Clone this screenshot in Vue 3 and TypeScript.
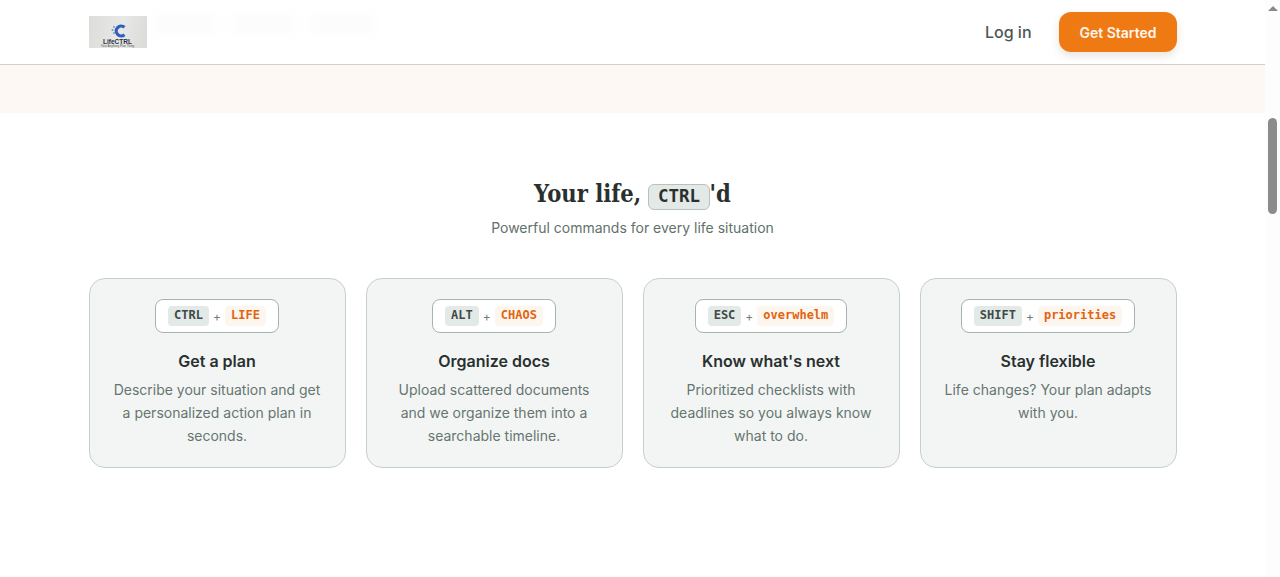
<script setup lang="ts">
interface Command {
  mod: string
  key: string
  title: string
  text: string
}

const commands: Command[] = [
  {
    mod: 'CTRL',
    key: 'LIFE',
    title: 'Get a plan',
    text: 'Describe your situation and get a personalized action plan in seconds.',
  },
  {
    mod: 'ALT',
    key: 'CHAOS',
    title: 'Organize docs',
    text: 'Upload scattered documents and we organize them into a searchable timeline.',
  },
  {
    mod: 'ESC',
    key: 'overwhelm',
    title: "Know what's next",
    text: 'Prioritized checklists with deadlines so you always know what to do.',
  },
  {
    mod: 'SHIFT',
    key: 'priorities',
    title: 'Stay flexible',
    text: 'Life changes? Your plan adapts with you.',
  },
]
</script>

<template>
  <div class="window">
    <div class="page">
      <header class="nav">
        <div class="nav-inner">
          <div class="brand">
            <div class="logo">
              <svg class="logo-mark" width="20" height="14" viewBox="0 0 20 14">
                <path d="M16.5 3.2A5 5 0 1 0 16.5 10.8" fill="none" stroke="#2f5fc0" stroke-width="3.2" />
                <circle cx="6" cy="3" r="1" fill="#7f93b8" />
                <circle cx="4.5" cy="6" r="1" fill="#7f93b8" />
                <circle cx="6" cy="9" r="1" fill="#7f93b8" />
              </svg>
              <span class="logo-name">LifeCTRL</span>
              <span class="logo-tag">Your Anything Plan Thing</span>
            </div>
            <div class="brand-blur">
              <span></span>
              <span></span>
              <span></span>
            </div>
          </div>
          <div class="nav-actions">
            <a class="login">Log in</a>
            <button class="cta">Get Started</button>
          </div>
        </div>
      </header>

      <div class="band"></div>

      <section class="features">
        <h2>Your life, <kbd class="title-key">CTRL</kbd>'d</h2>
        <p class="lead">Powerful commands for every life situation</p>

        <div class="grid">
          <article v-for="c in commands" :key="c.mod" class="card">
            <div class="combo">
              <span class="mod">{{ c.mod }}</span>
              <span class="plus">+</span>
              <span class="target">{{ c.key }}</span>
            </div>
            <h3>{{ c.title }}</h3>
            <p>{{ c.text }}</p>
          </article>
        </div>
      </section>
    </div>

    <div class="scrollbar">
      <span class="arrow"></span>
      <span class="thumb"></span>
    </div>
  </div>
</template>

<style>
html,
body {
  margin: 0;
  overflow: hidden;
  background: #fff;
}
</style>

<style scoped>
* {
  box-sizing: border-box;
}

.window {
  display: flex;
  height: 577px;
  overflow: hidden;
  font-family: Inter, 'Noto Sans', sans-serif;
  color: #252b2a;
}

.page {
  flex: 1;
  min-width: 0;
}

.nav {
  height: 65px;
  border-bottom: 1px solid #cdd3c6;
  background: #fff;
}

.nav-inner {
  max-width: 1152px;
  height: 64px;
  margin: 0 auto;
  padding: 0 32px;
  display: flex;
  align-items: center;
  justify-content: space-between;
}

.brand {
  display: flex;
  align-items: center;
  gap: 6px;
}

.logo {
  width: 58px;
  height: 32px;
  background: linear-gradient(100deg, #dcdcda, #e8e8e6 55%, #dadad8);
  display: flex;
  flex-direction: column;
  align-items: center;
  padding-top: 8px;
  overflow: hidden;
}

.logo-mark {
  display: block;
  flex: none;
}

.logo-name {
  font-size: 6.5px;
  line-height: 7px;
  font-weight: 700;
  color: #2a3344;
  font-family: 'Liberation Sans', sans-serif;
}

.logo-tag {
  font-size: 3px;
  line-height: 3px;
  color: #555;
  white-space: nowrap;
  font-family: 'Liberation Sans', sans-serif;
}

.brand-blur {
  display: flex;
  gap: 14px;
  width: 222px;
  margin-top: -16px;
  opacity: 0.2;
  filter: blur(5px);
}

.brand-blur span {
  flex: 1;
  height: 18px;
  background: #f0f0ee;
}

.nav-actions {
  display: flex;
  align-items: center;
  gap: 27px;
}

.login {
  font-size: 16px;
  font-weight: 500;
  color: #4c5755;
}

.cta {
  width: 118px;
  height: 40px;
  padding: 0 0 0 1px;
  border: none;
  border-radius: 12px;
  background: #ef7a13;
  color: #fdf6ee;
  font-family: inherit;
  font-size: 14px;
  font-weight: 600;
  box-shadow: 0 4px 8px rgba(90, 70, 40, 0.14);
}

.band {
  height: 48px;
  background: #fdf8f3;
}

.features {
  max-width: 1152px;
  margin: 0 auto;
  padding: 66px 32px 0;
  text-align: center;
}

h2 {
  margin: 0;
  font-family: 'DejaVu Serif Condensed', 'DejaVu Serif', serif;
  font-stretch: condensed;
  font-size: 23.5px;
  line-height: 30px;
  font-weight: 700;
  color: #2a302e;
}

.title-key {
  display: inline-block;
  padding: 0 8.5px;
  height: 26px;
  line-height: 23px;
  border: 1px solid #b7c2bc;
  border-radius: 6px;
  background: #e3e9e6;
  font-family: 'DejaVu Sans Mono', monospace;
  font-size: 17.5px;
  font-stretch: normal;
  font-weight: 700;
  vertical-align: 0;
}

.lead {
  margin: 7px 0 0;
  font-size: 14px;
  line-height: 22px;
  color: #62716b;
}

.grid {
  display: grid;
  grid-template-columns: repeat(4, 1fr);
  gap: 20px;
  margin-top: 39px;
}

.card {
  height: 190px;
  padding: 20px 20px 0;
  border: 1px solid #c6d0cb;
  border-radius: 16px;
  background: #f3f5f5;
  text-align: center;
}

.combo {
  display: inline-flex;
  align-items: center;
  height: 34px;
  padding: 0 12px;
  border: 1px solid #a9b3ae;
  border-radius: 8px;
  background: #fff;
  font-family: 'DejaVu Sans Mono', monospace;
  font-size: 12px;
  font-weight: 700;
}

.mod,
.target {
  height: 20px;
  line-height: 18px;
  padding: 0 6px;
  border-radius: 4px;
}

.mod {
  background: #e3e9e6;
  color: #3e4a47;
}

.target {
  background: #fdf6ef;
  color: #e2640f;
}

.plus {
  margin: 0 4px;
  font-family: Inter, sans-serif;
  font-size: 12px;
  font-weight: 400;
  color: #6f7c77;
}

h3 {
  margin: 16px 0 0;
  font-size: 16px;
  line-height: 24px;
  font-weight: 600;
  color: #2a302e;
}

.card p {
  margin: 5px 0 0;
  font-size: 14px;
  line-height: 23px;
  color: #66756f;
}

.scrollbar {
  flex: none;
  width: 15px;
  background: #fdfdfd;
  display: flex;
  flex-direction: column;
  align-items: center;
  padding-top: 6px;
}

.arrow {
  width: 0;
  height: 0;
  border-left: 5px solid transparent;
  border-right: 5px solid transparent;
  border-bottom: 5px solid #8a8a8a;
}

.thumb {
  width: 9px;
  height: 96px;
  margin-top: 107px;
  border-radius: 5px;
  background: #8b8b8b;
}
</style>
